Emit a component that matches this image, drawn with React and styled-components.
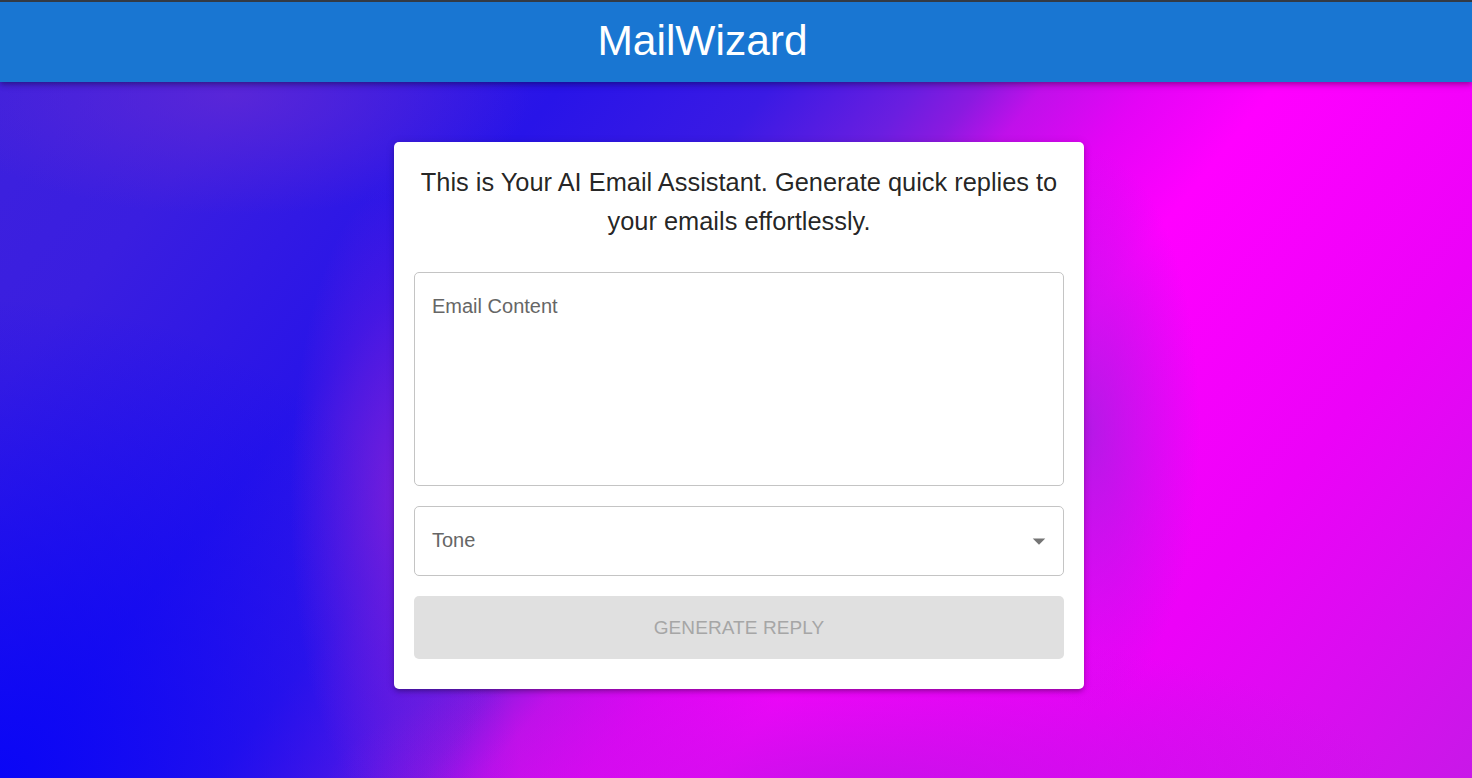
import React from "react";
import styled, { createGlobalStyle } from "styled-components";

const GlobalStyle = createGlobalStyle`
  html, body {
    margin: 0;
    padding: 0;
  }
  body {
    font-family: "Liberation Sans", Arial, sans-serif;
  }
  * {
    box-sizing: border-box;
  }
`;

const Page = styled.div`
  min-height: 100vh;
  background:
    radial-gradient(ellipse 300px 120px at 230px 95px, rgba(96, 40, 214, 0.8), rgba(96, 40, 214, 0) 100%),
    radial-gradient(ellipse 110px 320px at 400px 500px, rgba(140, 32, 216, 0.75), rgba(140, 32, 216, 0) 100%),
    radial-gradient(ellipse 110px 280px at 1090px 430px, rgba(160, 32, 224, 0.75), rgba(160, 32, 224, 0) 100%),
    radial-gradient(ellipse 540px 170px at 860px 800px, rgba(190, 20, 230, 0.85), rgba(190, 20, 230, 0) 100%),
    radial-gradient(ellipse 520px 480px at 0px 778px, rgba(10, 6, 246, 1), rgba(10, 6, 246, 0) 100%),
    linear-gradient(
      129deg,
      #3e22dc 0%,
      #3a1ee0 15%,
      #2814e8 30%,
      #3a1ae4 40%,
      #6a1ee0 47%,
      #8a1ae0 50%,
      #c010ea 53%,
      #e404f6 58%,
      #ff00ff 64%,
      #ec02f8 80%,
      #c818e8 100%
    );
`;

const AppBar = styled.header`
  height: 82px;
  border-top: 2px solid #333a44;
  background: #1976d2;
  color: #fff;
  display: flex;
  align-items: center;
  justify-content: center;
  padding: 0 67px 3px 0;
  box-shadow: 0 2px 4px -1px rgba(0, 0, 0, 0.2), 0 4px 5px 0 rgba(0, 0, 0, 0.14),
    0 1px 10px 0 rgba(0, 0, 0, 0.12);
  position: relative;
  z-index: 1;
`;

const Title = styled.h1`
  margin: 0;
  font-size: 42.5px;
  font-weight: 400;
  line-height: normal;
`;

const Main = styled.main`
  display: flex;
  justify-content: center;
  padding: 60px 0 0 6px;
`;

const Card = styled.section`
  width: 690px;
  background: #fff;
  border-radius: 5px;
  padding: 20px 20px 30px;
  box-shadow: 0 3px 4px -2px rgba(0, 0, 0, 0.2), 0 3px 5px 0 rgba(0, 0, 0, 0.14),
    0 1px 10px 0 rgba(0, 0, 0, 0.12);
`;

const Intro = styled.p`
  margin: 1px 0 31px;
  font-size: 25.4px;
  line-height: 39px;
  text-align: center;
  color: rgba(0, 0, 0, 0.87);
`;

const Form = styled.form`
  display: flex;
  flex-direction: column;
  gap: 20px;
`;

const EmailArea = styled.textarea`
  display: block;
  width: 100%;
  height: 214px;
  margin: 0;
  border: 1px solid #c4c4c4;
  border-radius: 5px;
  padding: 19px 17px;
  font-family: inherit;
  font-size: 20px;
  line-height: 28.75px;
  color: rgba(0, 0, 0, 0.87);
  resize: none;
  outline: none;

  &::placeholder {
    color: #666;
    opacity: 1;
  }
`;

const Select = styled.div`
  height: 70px;
  border: 1px solid #c4c4c4;
  border-radius: 5px;
  display: flex;
  align-items: center;
  justify-content: space-between;
  padding: 0 9px 1px 17px;
  font-size: 20px;
  color: #666;
  cursor: pointer;
`;

const Arrow = styled.svg`
  width: 30px;
  height: 30px;
  fill: #757575;
`;

const Button = styled.button`
  height: 63px;
  border: none;
  border-radius: 5px;
  background: #e0e0e0;
  color: #a6a6a6;
  font-family: inherit;
  font-size: 19px;
  font-weight: 500;
  letter-spacing: 0.1px;
  text-transform: uppercase;
  cursor: default;
`;

export default function App() {
  return (
    <>
      <GlobalStyle />
      <Page>
        <AppBar>
          <Title>MailWizard</Title>
        </AppBar>
        <Main>
          <Card>
            <Intro>
              This is Your AI Email Assistant. Generate quick replies to your emails effortlessly.
            </Intro>
            <Form onSubmit={(e) => e.preventDefault()}>
              <EmailArea placeholder="Email Content" />
              <Select>
                <span>Tone</span>
                <Arrow viewBox="0 0 24 24">
                  <path d="M7 10l5 5 5-5z" />
                </Arrow>
              </Select>
              <Button type="submit" disabled>
                Generate Reply
              </Button>
            </Form>
          </Card>
        </Main>
      </Page>
    </>
  );
}
